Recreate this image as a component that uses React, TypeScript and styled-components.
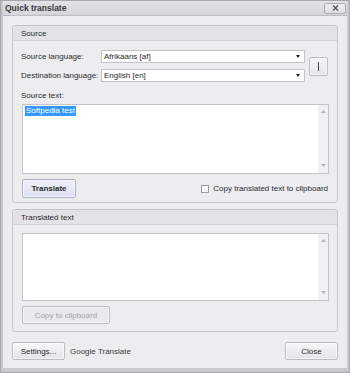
import React from 'react'
import styled, { createGlobalStyle } from 'styled-components'

const Global = createGlobalStyle`
  html, body { margin: 0; padding: 0; background: #ffffff; }
  * { box-sizing: border-box; }
`

const font = `"Liberation Sans", Arial, sans-serif`

const Frame = styled.div`
  width: 350px;
  height: 373px;
  display: flex;
  flex-direction: column;
  background: #c9c9cd;
  border: 1px solid #a9a9ad;
  padding: 0 2px 4px 2px;
  font-family: ${font};
  font-size: 8px;
  color: #2a2a2a;
`

const TitleBar = styled.div`
  height: 15px;
  display: flex;
  align-items: center;
  justify-content: space-between;
  padding: 0 1px 0 2px;
  background: linear-gradient(#e2e2e6, #d6d6da);
  border-bottom: 1px solid #bdbdc1;
`

const Title = styled.span`
  font-weight: bold;
  font-size: 8.5px;
  color: #3a3a3a;
`

const CloseX = styled.div`
  width: 22px;
  height: 11px;
  border: 1px solid #acacb0;
  border-radius: 2px;
  background: linear-gradient(#f0f0f2, #dcdce0);
  display: flex;
  align-items: center;
  justify-content: center;
`

const Body = styled.div`
  flex: 1;
  display: flex;
  flex-direction: column;
  background: #ededf0;
  padding: 9px 9px 8px 9px;
`

const Group = styled.div<{ $h: number }>`
  height: ${(p) => p.$h}px;
  border: 1px solid #c6c6ca;
  border-radius: 3px;
  background: #ededf0;
  display: flex;
  flex-direction: column;
`

const GroupHeader = styled.div`
  height: 15px;
  flex: none;
  background: #e3e3e7;
  border-bottom: 1px solid #d2d2d6;
  padding-left: 8px;
  display: flex;
  align-items: center;
  border-radius: 3px 3px 0 0;
`

const GroupContent = styled.div<{ $top: number }>`
  display: flex;
  flex-direction: column;
  padding: ${(p) => p.$top}px 8px 0 8px;
`

const LangArea = styled.div`
  display: flex;
  align-items: center;
  gap: 4px;
`

const LangRows = styled.div`
  display: flex;
  flex-direction: column;
  gap: 6px;
`

const LangRow = styled.div`
  display: flex;
  align-items: center;
`

const Label = styled.span<{ $w?: number }>`
  width: ${(p) => (p.$w ? `${p.$w}px` : 'auto')};
  white-space: nowrap;
`

const Select = styled.div`
  width: 204px;
  height: 13px;
  background: #ffffff;
  border: 1px solid #c4c4c8;
  display: flex;
  align-items: center;
  justify-content: space-between;
  padding: 0 4px 0 2px;
`

const Arrow = styled.span`
  width: 0;
  height: 0;
  border-left: 2.5px solid transparent;
  border-right: 2.5px solid transparent;
  border-top: 3px solid #222;
`

const Button = styled.div<{ $w: number; $h?: number; $default?: boolean; $disabled?: boolean }>`
  width: ${(p) => p.$w}px;
  height: ${(p) => p.$h ?? 18}px;
  flex: none;
  display: flex;
  align-items: center;
  justify-content: center;
  border: 1px solid ${(p) => (p.$default ? '#a8b0c8' : '#bdbdc1')};
  border-radius: 2px;
  background: ${(p) =>
    p.$default
      ? 'linear-gradient(#f0f1fb, #dde0f3)'
      : p.$disabled
        ? '#e9e9ec'
        : 'linear-gradient(#f7f7f9, #e4e4e8)'};
  color: ${(p) => (p.$disabled ? '#a4a4a8' : '#2a2a2a')};
  font-weight: ${(p) => (p.$default ? 'bold' : 'normal')};
  box-shadow: inset 0 0 0 1px rgba(255, 255, 255, 0.6);
`

const Bar = styled.span`
  width: 1px;
  height: 9px;
  background: #444;
`

const SourceLabel = styled.div`
  margin-top: 9px;
  height: 10px;
  line-height: 10px;
  padding-left: 0;
`

const TextBox = styled.div<{ $h: number; $top: number }>`
  margin-top: ${(p) => p.$top}px;
  margin-left: 1px;
  height: ${(p) => p.$h}px;
  background: #ffffff;
  border: 1px solid #c4c4c8;
  display: flex;
`

const TextArea = styled.div`
  flex: 1;
  padding: 1px 2px;
`

const Selected = styled.span`
  background: #3399ff;
  color: #ffffff;
  line-height: 10px;
  display: inline-block;
  padding: 0 1px;
`

const Scroll = styled.div`
  width: 10px;
  background: #f1f1f4;
  display: flex;
  flex-direction: column;
  justify-content: space-between;
  align-items: center;
  padding: 5px 0;
`

const ActionRow = styled.div`
  margin-top: 5px;
  margin-left: 1px;
  display: flex;
  align-items: center;
  justify-content: space-between;
`

const CheckWrap = styled.div`
  display: flex;
  align-items: center;
  gap: 4px;
  padding-right: 1px;
`

const Check = styled.span`
  width: 8px;
  height: 8px;
  background: #fafafa;
  border: 1px solid #9c9ca0;
`

const Footer = styled.div`
  margin-top: 10px;
  display: flex;
  align-items: center;
`

const Provider = styled.span`
  margin-left: 5px;
  flex: 1;
  color: #3a3a3a;
`

const ScrollArrows = () => (
  <Scroll>
    <svg width="5" height="4" viewBox="0 0 5 4">
      <path d="M2.5 0 L5 3 L0 3 Z" fill="#b4b4b8" />
    </svg>
    <svg width="5" height="4" viewBox="0 0 5 4">
      <path d="M0 0 L5 0 L2.5 3 Z" fill="#b4b4b8" />
    </svg>
  </Scroll>
)

export default function App() {
  return (
    <>
      <Global />
      <Frame>
        <TitleBar>
          <Title>Quick translate</Title>
          <CloseX>
            <svg width="7" height="6" viewBox="0 0 7 6">
              <path d="M1 0.5 L6 5.5 M6 0.5 L1 5.5" stroke="#555" strokeWidth="1.4" />
            </svg>
          </CloseX>
        </TitleBar>

        <Body>
          <Group $h={178}>
            <GroupHeader>Source</GroupHeader>
            <GroupContent $top={9}>
              <LangArea>
                <LangRows>
                  <LangRow>
                    <Label $w={80}>Source language:</Label>
                    <Select>
                      <span>Afrikaans [af]</span>
                      <Arrow />
                    </Select>
                  </LangRow>
                  <LangRow>
                    <Label $w={80}>Destination language:</Label>
                    <Select>
                      <span>English [en]</span>
                      <Arrow />
                    </Select>
                  </LangRow>
                </LangRows>
                <Button $w={19} $h={19}>
                  <Bar />
                </Button>
              </LangArea>

              <SourceLabel>Source text:</SourceLabel>
              <TextBox $h={70} $top={3}>
                <TextArea>
                  <Selected>Softpedia test</Selected>
                </TextArea>
                <ScrollArrows />
              </TextBox>

              <ActionRow>
                <Button $w={54} $h={19} $default>
                  Translate
                </Button>
                <CheckWrap>
                  <Check />
                  <Label>Copy translated text to clipboard</Label>
                </CheckWrap>
              </ActionRow>
            </GroupContent>
          </Group>

          <Group $h={123} style={{ marginTop: 6 }}>
            <GroupHeader>Translated text</GroupHeader>
            <GroupContent $top={8}>
              <TextBox $h={68} $top={0}>
                <TextArea />
                <ScrollArrows />
              </TextBox>
              <ActionRow style={{ marginTop: 5 }}>
                <Button $w={88} $disabled>
                  Copy to clipboard
                </Button>
              </ActionRow>
            </GroupContent>
          </Group>

          <Footer>
            <Button $w={53}>Settings...</Button>
            <Provider>Google Translate</Provider>
            <Button $w={53}>Close</Button>
          </Footer>
        </Body>
      </Frame>
    </>
  )
}
